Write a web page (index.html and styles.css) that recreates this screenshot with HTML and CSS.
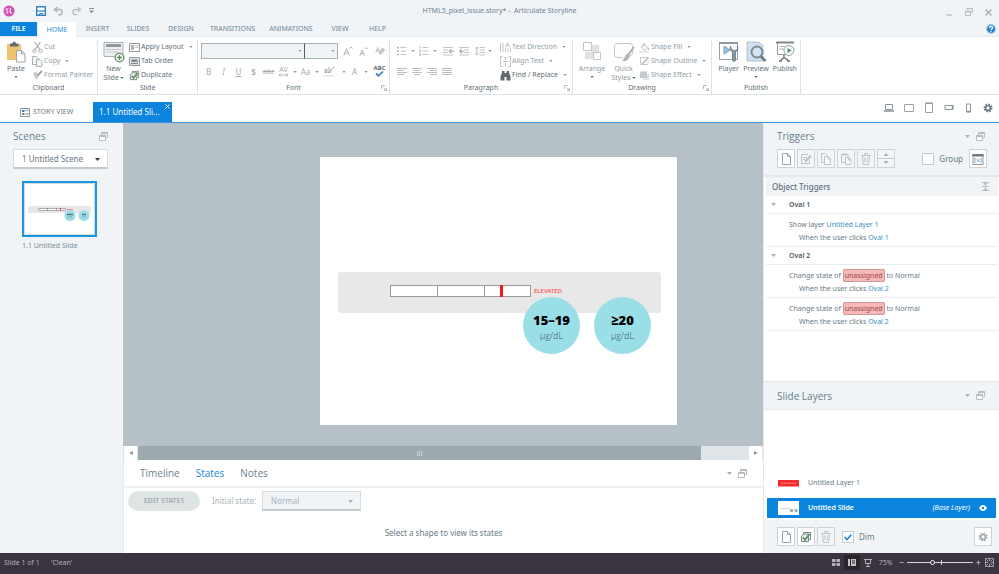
FILE: index.html
```html
<!DOCTYPE html>
<html lang="en">
<head>
<meta charset="utf-8">
<title>HTML5_pixel_issue.story* - Articulate Storyline</title>
<link rel="stylesheet" href="styles.css">
</head>
<body>
<svg class="defs" aria-hidden="true">
  <symbol id="i-caret" viewBox="0 0 5 3"><path d="M0 0h5L2.500 3z" fill="currentColor"/></symbol>
  <symbol id="i-launch" viewBox="0 0 6 6"><path d="M.5 4V.5H4M2.500 2.500l3 3M5.500 3v2.500H3" fill="none" stroke="#b4bcc1"/></symbol>
  <symbol id="i-dock" viewBox="0 0 9 9"><path d="M2.500 3V.5h6v5H7" fill="none" stroke="#b5bdc2"/><path d="M2.500 1.200h6" stroke="#b5bdc2" stroke-width="1.500"/><path d="M.5 3.500h6v5h-6z" fill="#fff" stroke="#b5bdc2"/><path d="M.5 4.200h6" stroke="#b5bdc2" stroke-width="1.500"/></symbol>
  <symbol id="i-page" viewBox="0 0 12 14"><path d="M2.500 1.500h5l3 3v8h-8zM7.500 1.500v3h3" fill="#fff" stroke="currentColor"/></symbol>
  <symbol id="i-copy" viewBox="0 0 12 14"><path d="M1.500 1.500h4l2 2v7h-6z" fill="none" stroke="currentColor"/><path d="M4.500 4.500h4l2 2v6h-6zM8 4.500v2.500h2.500" fill="#f7f9fa" stroke="currentColor"/></symbol>
  <symbol id="i-clip" viewBox="0 0 12 14"><path d="M1.500 2.500h6.500v8h-6.500z" fill="none" stroke="currentColor"/><path d="M3 2.500h3.500" stroke="currentColor" stroke-width="2"/><path d="M5.500 5.500h3.500l2 2v5h-5.500zM8.500 5.500v2.500h2.500" fill="#f7f9fa" stroke="currentColor"/></symbol>
  <symbol id="i-trash" viewBox="0 0 12 14"><path d="M1.500 3.500h9M4.500 3v-1.500h3v1.500M2.500 4l.7 8.500h5.600L9.500 4M4.800 5.500v5M7.200 5.500v5" fill="none" stroke="currentColor"/></symbol>
  <symbol id="i-gear" viewBox="0 0 12 12"><circle cx="6" cy="6" r="4.400" fill="none" stroke="currentColor" stroke-width="2" stroke-dasharray="1.730 1.730"/><circle cx="6" cy="6" r="2.900" fill="none" stroke="currentColor" stroke-width="1.700"/></symbol>
  <symbol id="i-al" viewBox="0 0 10 9"><path d="M0 1.500h10M0 3.500h7M0 5.500h10M0 7.500h7" stroke="#b8bec2"/></symbol>
  <symbol id="i-ac" viewBox="0 0 10 9"><path d="M0 1.500h10M2 3.500h6M0 5.500h10M2 7.500h6" stroke="#b8bec2"/></symbol>
  <symbol id="i-ar" viewBox="0 0 10 9"><path d="M0 1.500h10M3 3.500h7M0 5.500h10M3 7.500h7" stroke="#b8bec2"/></symbol>
  <symbol id="i-aj" viewBox="0 0 10 9"><path d="M0 1.500h10M0 3.500h10M0 5.500h10M0 7.500h10" stroke="#b8bec2"/></symbol>
  <symbol id="i-dup" viewBox="0 0 12 12"><path d="M3.500 3V1.500h7v7H9" fill="none" stroke="#77848b"/><path d="M1.500 5l2.500-2h4.500v7.500h-7z" fill="#e9f2ea" stroke="#77848b"/><path d="M3 6.500l2 2.300L9.500 3" fill="none" stroke="#55905a" stroke-width="1.800"/></symbol>
</svg>

<div class="app">
  <header class="titlebar">
    <div class="quick">
      <svg class="logo" viewBox="0 0 12 12" aria-hidden="true"><circle cx="6" cy="6" r="5.500" fill="#cf4fb5"/><path d="M5.500 3.800H4c-1.300 0-1.300 2 0 2s1.500 2.200 0 2.200H2.700M7.300 2.800V8h2" fill="none" stroke="#fff"/></svg>
      <button class="ico save" aria-label="Save"><svg width="10" height="10" viewBox="0 0 10 10"><path d="M.7.7h8.600v8.600H.7z" fill="#fff" stroke="#2f83c4" stroke-width="1.400"/><path d="M1 5h8" stroke="#2f83c4" stroke-width="1.200"/><path d="M3.500 9V7.500h3V9" fill="none" stroke="#2f83c4"/></svg></button>
      <button class="ico" aria-label="Undo"><svg width="11" height="10" viewBox="0 0 11 10"><path d="M4.500 1L1.500 3.500l3 2.500M2 3.500h4.500c3.500 0 3.500 5.300 0 5.300H5" fill="none" stroke="#a9b6bf" stroke-width="1.500"/></svg></button>
      <button class="ico" aria-label="Redo"><svg width="11" height="10" viewBox="0 0 11 10"><path d="M6.500 1l3 2.500-3 2.500M9 3.500H4.500c-3.500 0-3.500 5.300 0 5.300H6" fill="none" stroke="#b9c3ca" stroke-width="1.500"/></svg></button>
      <button class="ico" aria-label="Customize"><svg width="5" height="6" viewBox="0 0 5 6"><path d="M0 .5h5" stroke="#8b969d"/><path d="M0 2.500h5L2.500 5.500z" fill="#8b969d"/></svg></button>
    </div>
    <h1 class="title">HTML5_pixel_issue.story* -&nbsp; Articulate Storyline</h1>
    <div class="winbtns">
      <button class="ico" aria-label="Minimize"><svg width="7" height="8" viewBox="0 0 7 8"><path d="M0 7h6" stroke="#a4acb1"/></svg></button>
      <button class="ico" aria-label="Restore"><svg width="8" height="8" viewBox="0 0 8 8"><path d="M2 2V.5h5.500V4H6M.5 3h5v4.500h-5zM.5 4h5" fill="none" stroke="#b4bbc0"/></svg></button>
      <button class="ico" aria-label="Close"><svg width="7" height="7" viewBox="0 0 7 7"><path d="M.5.5l6 6M6.500.5l-6 6" stroke="#a4acb1" stroke-width="1.300"/></svg></button>
    </div>
  </header>

  <nav class="menu" aria-label="Ribbon tabs">
    <button class="file">FILE</button>
    <button class="on">HOME</button>
    <button class="m-insert">INSERT</button>
    <button class="m-slides">SLIDES</button>
    <button class="m-design">DESIGN</button>
    <button class="m-trans">TRANSITIONS</button>
    <button class="m-anim">ANIMATIONS</button>
    <button class="m-view">VIEW</button>
    <button class="m-help">HELP</button>
    <button class="ico help" aria-label="Help"><svg width="10" height="10" viewBox="0 0 10 10"><circle cx="5" cy="5" r="4.400" fill="#2a7fcb" stroke="#a5c8e6" stroke-width="1.200"/><path d="M3.500 4c0-2 3-2 3-.3C6.500 5 5 4.800 5 6" fill="none" stroke="#fff" stroke-width="1.200"/><circle cx="5" cy="7.500" r=".7" fill="#fff"/></svg></button>
  </nav>

  <div class="ribbon">
    <section class="group g-clip">
      <div class="body">
        <button class="big w33">
          <svg width="22" height="22" viewBox="0 0 22 22"><path d="M2 3h14v16H2z" fill="#f0c46e"/><path d="M5 5.500v-3h2.500c0-2.500 3.500-2.500 3.500 0h2.500v3z" fill="#626a70"/><path d="M11.500 9.500h5l3.500 3.500v8h-8.500zM16.500 9.500V13H20" fill="#fff" stroke="#9aa3a9"/></svg>
          <span>Paste</span><svg class="caret"><use href="#i-caret"/></svg></button>
        <div class="stack">
          <button class="small off"><svg viewBox="0 0 11 11"><path d="M2.500 0L8 7.500M8.500 0L3 7.500" stroke="#a4abb0" stroke-width="1.200"/><circle cx="2.500" cy="8.800" r="1.600" fill="none" stroke="#a4abb0"/><circle cx="8.500" cy="8.800" r="1.600" fill="none" stroke="#a4abb0"/></svg>Cut</button>
          <button class="small off"><svg viewBox="0 0 11 11"><path d="M.5.500h4l2 2v6h-6z" fill="#f3f5f6" stroke="#abb2b7"/><path d="M4.500 3.500h3.500l2 2v5H4.500z" fill="#f3f5f6" stroke="#abb2b7"/></svg>Copy<svg class="caret"><use href="#i-caret"/></svg></button>
          <button class="small off"><svg viewBox="0 0 11 11"><path d="M1 3l3-1 3 3.500L4.500 10C3 8 2 6 1 3z" fill="#c6cbcf"/><path d="M5.500 5.500L10 1" stroke="#a0a7ac" stroke-width="1.800"/></svg>Format Painter</button>
        </div>
      </div>
      <h2>Clipboard</h2>
    </section>

    <section class="group g-slide">
      <div class="body">
        <button class="big w31 newslide">
          <svg width="22" height="22" viewBox="0 0 22 22"><path d="M1 1.500h19v14H1z" fill="#edf0f2" stroke="#a9b0b5"/><path d="M3 4.500h15" stroke="#8f989e" stroke-width="3"/><path d="M3 8.500h15M3 11h11" stroke="#c3c9cd"/><circle cx="16.500" cy="16.500" r="4.300" fill="#fff" stroke="#7b9a80" stroke-width="1.600"/><path d="M16.500 14v5M14 16.500h5" stroke="#5c8a62" stroke-width="1.500"/></svg>
          <span>New<br>Slide<svg class="caret"><use href="#i-caret"/></svg></span></button>
        <div class="stack">
          <button class="small"><svg viewBox="0 0 11 11"><path d="M.5 1.500h10v8H.5z" fill="#fff" stroke="#8f989e"/><path d="M2 3h3v5H2z" fill="#aab2b7"/><path d="M6 3.500h3.500M6 5.500h3.500" stroke="#b7bec2"/></svg>Apply Layout<svg class="caret gap"><use href="#i-caret"/></svg></button>
          <button class="small"><svg viewBox="0 0 11 11"><path d="M.5 1.500h10v8H.5z" fill="#dfe3e6" stroke="#8f989e"/><path d="M2.500 3.500h6v2.500h-6z" fill="#7f898f"/><path d="M2 7.500h7" stroke="#7f898f"/></svg>Tab Order</button>
          <button class="small"><svg><use href="#i-dup"/></svg>Duplicate</button>
        </div>
      </div>
      <h2>Slide</h2>
    </section>

    <section class="group g-font">
      <div class="fontrow">
        <div class="selwrap fname"><select aria-label="Font"><option></option></select><svg class="caret"><use href="#i-caret"/></svg></div><div class="selwrap fsize"><select aria-label="Font size"><option></option></select><svg class="caret"><use href="#i-caret"/></svg></div>
        <div class="sizers">
          <button class="t" aria-label="Grow font"><svg width="10" height="11" viewBox="0 0 10 11"><path d="M.8 9.500L3.500 2.500l2.800 7M1.700 7h3.700M6.500 2.500L8 1l1.500 1.500" fill="none" stroke="#b0b7bb"/></svg></button>
          <button class="t" aria-label="Shrink font"><svg width="10" height="11" viewBox="0 0 10 11"><path d="M1 9.500l2.200-5.500 2.200 5.500M1.800 7.500h2.900M6 1.500l1.500 1.500L9 1.500" fill="none" stroke="#b0b7bb"/></svg></button>
          <button class="t" aria-label="Clear formatting"><svg width="10" height="10" viewBox="0 0 10 10"><path d="M.8 6.500l2-5 2 5M1.500 5h2.700" fill="none" stroke="#b8bec2"/><path d="M4 7l3.500-5L9.500 4 6 8.500z" fill="#ccd1d4" stroke="#b8bec2"/></svg></button>
        </div>
      </div>
      <div class="fontrow two">
        <button class="t">B</button><button class="t"><i>I</i></button><button class="t"><u>U</u></button><button class="t"><b>S</b></button><button class="t strike"><s>abc</s></button>
        <button class="t av" aria-label="Character spacing"><span>AV</span><svg width="11" height="4" viewBox="0 0 11 4"><path d="M1 2h9M2.500.5L1 2l1.500 1.500M8.500.5L10 2 8.500 3.500" fill="none" stroke="#b0b7bb"/></svg></button><svg class="caret"><use href="#i-caret"/></svg>
        <button class="t wide">Aa</button><svg class="caret"><use href="#i-caret"/></svg>
        <button class="t hl" aria-label="Highlight"><svg width="12" height="11" viewBox="0 0 12 11"><path d="M0 9h11v2H0z" fill="#e9edf0"/><path d="M4 7l5.500-5.500M9 .500l1.500 1.500M.5 3.500h2.500v3H1c-1 0-1-1.500 0-1.500h2M5 1v5.500h1.500c1 0 1-2.500 0-2.500" fill="none" stroke="#a9b0b5"/></svg></button><svg class="caret"><use href="#i-caret"/></svg>
        <button class="t a">A</button><svg class="caret"><use href="#i-caret"/></svg>
        <button class="t spell" aria-label="Spelling"><span>ABC</span><svg width="9" height="6" viewBox="0 0 9 6"><path d="M1 2.500l2.500 2.300L8 .5" fill="none" stroke="#3c7fc0" stroke-width="1.700"/></svg></button>
      </div>
      <h2>Font<svg class="launch"><use href="#i-launch"/></svg></h2>
    </section>

    <section class="group g-para">
      <div class="body">
        <div class="pcol">
          <div class="prow">
            <svg width="11" height="10" viewBox="0 0 11 10"><path d="M0 1.500h2M0 5h2M0 8.500h2" stroke="#aeb5b9" stroke-width="1.500"/><path d="M3.500 1.500h6M3.500 5h6M3.500 8.500h6" stroke="#c0c6ca"/></svg><svg class="caret"><use href="#i-caret"/></svg>
            <svg width="11" height="10" viewBox="0 0 11 10"><path d="M1 0v2.500M0 4h1.500v1.500H0M0 7.500h1.500v2H0" fill="none" stroke="#aeb5b9" stroke-width=".8"/><path d="M3.500 1.500h6M3.500 5h6M3.500 8.500h6" stroke="#c0c6ca"/></svg><svg class="caret"><use href="#i-caret"/></svg>
            <svg class="ind" width="11" height="9" viewBox="0 0 11 9"><path d="M0 .5h10M0 3h5M0 5.500h5M0 8h10" stroke="#c0c6ca"/><path d="M11 4.300H6.500M8.500 2L6.200 4.300l2.300 2.200" fill="none" stroke="#aeb5b9" stroke-width="1.200"/></svg>
            <svg class="ind" width="11" height="9" viewBox="0 0 11 9"><path d="M0 .5h10M5 3h5M5 5.500h5M0 8h10" stroke="#c0c6ca"/><path d="M5 4.300H.8M2.800 2L.6 4.300l2.200 2.200" fill="none" stroke="#aeb5b9" stroke-width="1.200"/></svg>
            <svg class="ind" width="10" height="10" viewBox="0 0 10 10"><path d="M4.500 1.500H10M4.500 4H10M4.500 6.500H10M4.500 9H10" stroke="#c0c6ca"/><path d="M1.800 1v8M.3 2.500L1.800 1l1.500 1.500M.3 7.500L1.800 9l1.500-1.500" fill="none" stroke="#aeb5b9"/></svg><svg class="caret"><use href="#i-caret"/></svg>
          </div>
          <div class="prow al">
            <button class="ico" aria-label="Align left"><svg width="10" height="9"><use href="#i-al"/></svg></button><button class="ico" aria-label="Center"><svg width="10" height="9"><use href="#i-ac"/></svg></button><button class="ico" aria-label="Align right"><svg width="10" height="9"><use href="#i-ar"/></svg></button><button class="ico" aria-label="Justify"><svg width="10" height="9"><use href="#i-aj"/></svg></button>
          </div>
        </div>
        <div class="stack">
          <button class="small off"><svg viewBox="0 0 11 11"><path d="M.5 1v9M3 1v9M5.500 6v4M8 6v4M10.500 6v4M5.500 5L7.500.500l2 4.500M6.500 3.500h2" fill="none" stroke="#b8bec2" stroke-width=".9"/></svg>Text Direction<svg class="caret"><use href="#i-caret"/></svg></button>
          <button class="small off"><svg viewBox="0 0 11 11"><path d="M2.500.500h-2v10h2M8.500.500h2v10h-2M3 5.500h5M5.500 4V1M4.500 2l1-1 1 1M5.500 7v3M4.500 9l1 1 1-1" fill="none" stroke="#b8bec2" stroke-width=".9"/></svg>Align Text<svg class="caret"><use href="#i-caret"/></svg></button>
          <button class="small"><svg viewBox="0 0 11 11"><path d="M2 1h2.500v2h2V1H9v2l1.500 3v4.500h-4V7h-2v3.500h-4V6L2 3z" fill="#626a6f"/></svg>Find / Replace<svg class="caret"><use href="#i-caret"/></svg></button>
        </div>
      </div>
      <h2>Paragraph<svg class="launch"><use href="#i-launch"/></svg></h2>
    </section>

    <section class="group g-draw">
      <div class="body">
        <button class="big off w33">
          <svg width="22" height="22" viewBox="0 0 22 22"><path d="M4 11h8v7H4z" fill="#dfe2e4"/><path d="M10 4h8v8h-8z" fill="#dfe2e4"/><path d="M2.500 1.500h8v8h-8z" fill="#fff" stroke="#bec4c8"/><path d="M12.500 11.500h7v7h-7z" fill="#fff" stroke="#bec4c8"/></svg>
          <span>Arrange</span><svg class="caret"><use href="#i-caret"/></svg></button>
        <button class="big off w31">
          <svg width="22" height="22" viewBox="0 0 22 22"><path d="M4.500 2.500h12c2 0 3 1 3 3v6c0 2-1 3-3 3l-6 4-2-2h-4c-2 0-3-1-3-3v-8c0-2 1-3 3-3z" fill="#fdfdfd" stroke="#bec4c8"/><path d="M21 6l-6 8" stroke="#a9b0b5" stroke-width="2"/><path d="M14.500 12.500l2.500 2c-1 4-4 6-8 6 3-1.500 2-6 5.500-8z" fill="#aeb5ba"/></svg>
          <span>Quick<br>Styles<svg class="caret"><use href="#i-caret"/></svg></span></button>
        <div class="stack">
          <button class="small off"><svg viewBox="0 0 11 11"><path d="M5 1.500l4 4-3.500 3-3.500-3.500zM5 1.500v3M9.500 6v2" fill="none" stroke="#b4bbbf"/><path d="M0 9h10v2H0z" fill="#e6eaec"/></svg>Shape Fill<svg class="caret"><use href="#i-caret"/></svg></button>
          <button class="small off"><svg viewBox="0 0 11 11"><path d="M8 1.500H1.500v7H9V5" fill="none" stroke="#c6ccd0"/><path d="M3 8l6.500-6.500" stroke="#aeb5b9" stroke-width="1.300"/></svg>Shape Outline<svg class="caret"><use href="#i-caret"/></svg></button>
          <button class="small off"><svg viewBox="0 0 11 11"><path d="M4 4h6v6H4z" fill="#dde1e4"/><path d="M1 1.500h7v6.500H1z" fill="#c3c9cd"/></svg>Shape Effect<svg class="caret"><use href="#i-caret"/></svg></button>
        </div>
      </div>
      <h2>Drawing<svg class="launch"><use href="#i-launch"/></svg></h2>
    </section>

    <section class="group g-pub">
      <div class="body">
        <button class="big w27">
          <svg width="22" height="22" viewBox="0 0 22 22"><path d="M1.500 1.500h18v17h-18z" fill="#fff" stroke="#98a1a7"/><path d="M1 1h19v2H1z" fill="#8d979d"/><path d="M6 5v8l6-4z" fill="#9cc3e6" stroke="#6f9dc4"/><path d="M12.500 5c-1 3 0 5 2 6v8c0 2 3 2 3 0v-8c2-1 3-3 2-6v3.500l-3 1-3-1z" fill="#8b98a1" stroke="#6e7a82" stroke-width=".8"/></svg>
          <span>Player</span></button>
        <button class="big w27">
          <svg width="22" height="22" viewBox="0 0 22 22"><path d="M2 1h12l4 4v15H2z" fill="#cfe0f2" stroke="#98a1a7" stroke-dasharray="1.500 1"/><circle cx="12" cy="11" r="5.500" fill="#d4e4f3" stroke="#7e8b94" stroke-width="2"/><path d="M16 15.500l4.500 4.500" stroke="#6e7a82" stroke-width="2.500"/></svg>
          <span>Preview</span><svg class="caret"><use href="#i-caret"/></svg></button>
        <button class="big w31">
          <svg width="22" height="22" viewBox="0 0 22 22"><path d="M2 1.500h18" stroke="#7e888e" stroke-width="2"/><path d="M3.500 2v11.500h10" fill="none" stroke="#98a1a7"/><path d="M5 5.500h6M5 8h5" stroke="#b0b7bb"/><circle cx="15" cy="9.500" r="5" fill="#f7faf8" stroke="#98a1a7"/><path d="M13.500 7v5l4-2.500z" fill="#4d9572"/><path d="M10 14v3M6 20l4-3.500L15 20M5 20h3M13 20h3" fill="none" stroke="#6e787e" stroke-width="1.500"/></svg>
          <span>Publish</span></button>
      </div>
      <h2>Publish</h2>
    </section>
  </div>

  <div class="docs">
    <button class="story"><svg width="10" height="9" viewBox="0 0 10 9"><path d="M.5.5h9v8h-9z" fill="#fff" stroke="#8b969d"/><path d="M2 2h2.500v2H2z" fill="#2f83c4"/><path d="M2 5h2.500v2H2z" fill="#77838a"/><path d="M5.500 2.500H8.500M5.500 6h3" stroke="#9aa4aa" stroke-width="1.500"/></svg>STORY VIEW</button>
    <div class="doctab"><span>1.1 Untitled Sli...</span><button class="ico x" aria-label="Close tab"><svg width="5" height="5" viewBox="0 0 5 5"><path d="M.5.5l4 4M4.500.5l-4 4" stroke="#fff"/></svg></button></div>
    <div class="devices">
      <button class="ico" aria-label="Desktop"><svg width="12" height="12" viewBox="0 0 12 12"><path d="M2.500 2.500h7v5h-7z" fill="none" stroke="#8b959b"/><path d="M1 9h10" stroke="#8b959b" stroke-width="1.500"/></svg></button>
      <button class="ico" aria-label="Tablet landscape"><svg width="12" height="12" viewBox="0 0 12 12"><path d="M1.500 2.500h9v7h-9z" fill="none" stroke="#9aa3a8"/></svg></button>
      <button class="ico" aria-label="Tablet portrait"><svg width="12" height="12" viewBox="0 0 12 12"><path d="M2.500 1.500h7v9h-7z" fill="none" stroke="#9aa3a8"/><path d="M2 1h8" stroke="#8b959b"/></svg></button>
      <button class="ico" aria-label="Phone landscape"><svg width="12" height="12" viewBox="0 0 12 12"><path d="M2 3.500h8v4H2z" fill="none" stroke="#8b959b"/><path d="M9.500 3v5" stroke="#8b959b" stroke-width="1.500"/></svg></button>
      <button class="ico" aria-label="Phone portrait"><svg width="12" height="12" viewBox="0 0 12 12"><path d="M3.500 2h4v8h-4z" fill="none" stroke="#8b959b"/><path d="M3.500 9.500h4" stroke="#8b959b" stroke-width="1.500"/></svg></button>
      <button class="ico gear" aria-label="Settings"><svg width="10" height="10"><use href="#i-gear"/></svg></button>
    </div>
  </div>

  <main class="work">
    <aside class="scenes">
      <div class="phead"><h2>Scenes</h2><svg class="dock"><use href="#i-dock"/></svg></div>
      <div class="selwrap scene"><select aria-label="Scene"><option>1 Untitled Scene</option></select><svg class="caret"><use href="#i-caret"/></svg></div>
      <figure>
        <svg class="thumb" viewBox="0 0 75 56" aria-hidden="true"><path d="M1 1h73v54H1z" fill="#fff" stroke="#1a96dd" stroke-width="2"/><path d="M2.500 2.500h70v51h-70z" fill="#fff" stroke="#d5dade"/><path d="M6 25h63v7H6z" fill="#e8e8e8"/><path d="M16.500 27.500h27v2h-27zM25.500 27v3M34.500 27v3" fill="#fff" stroke="#8d8d8d" stroke-width=".7"/><path d="M38.500 27v3" stroke="#e44" stroke-width="1"/><path d="M45 28.500h6" stroke="#f08a86"/><circle cx="48" cy="34.500" r="5.500" fill="#9adfe7"/><circle cx="62" cy="34.500" r="5.500" fill="#9adfe7"/><path d="M45 33.500h6M60 33.500h4" stroke="#3d5054" stroke-width="1.500" stroke-dasharray="1.500 .6"/><path d="M46 36h4M60.500 36h3" stroke="#6a8a90" stroke-dasharray="1 .6"/></svg>
        <figcaption>1.1 Untitled Slide</figcaption>
      </figure>
    </aside>

    <div class="center">
      <div class="stage">
        <div class="slide">
          <div class="band"></div>
          <div class="gauge"><span></span><span></span><span></span></div>
          <div class="mark"></div>
          <div class="elev">ELEVATED</div>
          <div class="oval one"><strong>15–19</strong><span>μg/dL</span></div>
          <div class="oval second"><strong>≥20</strong><span>μg/dL</span></div>
        </div>
      </div>
      <div class="hscroll">
        <button class="ico" aria-label="Scroll left"><svg width="4" height="4" viewBox="0 0 4 4"><path d="M4 0v4L0 2z" fill="#8d989e"/></svg></button>
        <div class="thumbbar"><i></i><i></i><i></i></div>
        <div class="track"></div>
        <button class="ico" aria-label="Scroll right"><svg width="4" height="4" viewBox="0 0 4 4"><path d="M0 0v4l4-2z" fill="#8d989e"/></svg></button>
      </div>
      <section class="bottom">
        <div class="btabs"><button>Timeline</button><button class="on">States</button><button>Notes</button><span class="tools"><svg class="caret"><use href="#i-caret"/></svg><svg class="dock"><use href="#i-dock"/></svg></span></div>
        <div class="states">
          <button class="edit">EDIT STATES</button>
          <label for="init">Initial state:</label>
          <div class="selwrap init"><select id="init"><option>Normal</option></select><svg class="caret"><use href="#i-caret"/></svg></div>
        </div>
        <p class="hint">Select a shape to view its states</p>
      </section>
    </div>

    <aside class="right">
      <div class="trighead">
        <div class="phead"><h2>Triggers</h2><span class="tools"><svg class="caret"><use href="#i-caret"/></svg><svg class="dock"><use href="#i-dock"/></svg></span></div>
        <div class="tbar">
          <button class="sq live" aria-label="New trigger"><svg><use href="#i-page"/></svg></button>
          <button class="sq" aria-label="Edit"><svg viewBox="0 0 12 14"><path d="M9.500 8v3.500h-8v-9H8M3 5.500h4M3 7.500h2.500" fill="none" stroke="currentColor"/><path d="M5 10l6-6.500" stroke="currentColor" stroke-width="2"/></svg></button>
          <button class="sq" aria-label="Copy"><svg><use href="#i-copy"/></svg></button>
          <button class="sq" aria-label="Paste"><svg><use href="#i-clip"/></svg></button>
          <button class="sq" aria-label="Delete"><svg><use href="#i-trash"/></svg></button>
          <button class="sq" aria-label="Reorder"><svg class="ud" viewBox="0 0 16 17"><path d="M0 8.500h16" stroke="#c5ccd0"/><path d="M5.500 6h5L8 3zM5.500 11h5L8 14z" fill="#aab2b7"/></svg></button>
          <label class="check grp"><input type="checkbox">Group</label>
          <button class="sq live" aria-label="Variables"><svg viewBox="0 0 12 14"><path d="M1 2.500h10v10H1z" fill="#fff" stroke="#8b969d"/><path d="M.5 2h11v2.500H.5z" fill="#6b767d"/><path d="M3.500 6c-1 1-1 4 0 5M8.500 6c1 1 1 4 0 5M4.800 7.200l2.400 2.600M7.200 7.200L4.800 9.800" fill="none" stroke="#5b97c6" stroke-width=".9"/></svg></button>
        </div>
      </div>
      <div class="triggers">
        <div class="objhead"><h3>Object Triggers</h3><svg width="7" height="9" viewBox="0 0 7 9"><path d="M0 4.500h7M0 .5h7M0 8.500h7" stroke="#b8bfc4"/><path d="M1.500 1h4L3.500 4zM1.500 8h4L3.500 5z" fill="#b8bfc4"/></svg></div>
        <h4><svg class="caret"><use href="#i-caret"/></svg>Oval 1</h4>
        <div class="trig"><p>Show layer <a href="#layer">Untitled Layer 1</a></p><p class="when">When the user clicks <a href="#oval1">Oval 1</a></p></div>
        <h4><svg class="caret"><use href="#i-caret"/></svg>Oval 2</h4>
        <div class="trig"><p>Change state of <mark>unassigned</mark> to Normal</p><p class="when">When the user clicks <a href="#oval2">Oval 2</a></p></div>
        <div class="trig"><p>Change state of <mark>unassigned</mark> to Normal</p><p class="when">When the user clicks <a href="#oval2">Oval 2</a></p></div>
      </div>
      <div class="phead layhead"><h2>Slide Layers</h2><span class="tools"><svg class="caret"><use href="#i-caret"/></svg><svg class="dock"><use href="#i-dock"/></svg></span></div>
      <div class="layers">
        <div class="layer"><svg viewBox="0 0 21 14"><path d="M0 4h21v6.500H0z" fill="#f42a2a"/><path d="M3 7.200h15" stroke="#ff9a9a" stroke-dasharray="2 .7"/></svg>Untitled Layer 1</div>
        <div class="layer sel"><svg viewBox="0 0 21 14"><path d="M0 0h21v14H0z" fill="#fff"/><path d="M2 7.500h10" stroke="#d2d6d9"/><path d="M12 8h3v3h-3zM16.500 8h3v3h-3z" fill="#9fb0b5"/></svg><b>Untitled Slide</b><em>(Base Layer)</em><svg class="eye" viewBox="0 0 8 6"><path d="M0 3c2-4 6-4 8 0-2 4-6 4-8 0z" fill="#fff"/><circle cx="4" cy="3" r="1.200" fill="#0a84dc"/></svg></div>
      </div>
      <div class="tbar laybar">
        <button class="sq live" aria-label="New layer"><svg><use href="#i-page"/></svg></button>
        <button class="sq live" aria-label="Duplicate layer"><svg><use href="#i-dup"/></svg></button>
        <button class="sq" aria-label="Delete layer"><svg><use href="#i-trash"/></svg></button>
        <label class="check dim"><input type="checkbox" checked>Dim</label>
        <button class="sq live last" aria-label="Layer properties"><svg class="g"><use href="#i-gear"/></svg></button>
      </div>
    </aside>
  </main>

  <footer class="status">
    <span>Slide 1 of 1</span><span class="clean">'Clean'</span>
    <div class="views">
      <button class="ico" aria-label="Story view"><svg width="8" height="7" viewBox="0 0 8 7"><path d="M0 0h3.500v3H0zM4.500 0H8v3H4.500zM0 4h3.500v3H0zM4.500 4H8v3H4.500z" fill="#b3afb7"/></svg></button>
      <button class="ico on" aria-label="Slide view"><svg width="8" height="7" viewBox="0 0 8 7"><path d="M0 0h8v7H0z" fill="#c6c2c9"/><path d="M2.500 0v7M4 2h3M4 4h3" stroke="#2a252d"/></svg></button>
      <button class="ico" aria-label="Preview"><svg width="8" height="8" viewBox="0 0 8 8"><path d="M0 .5h8M1.500 1v3.500h5V1M4 4.500V7M2 7.500h4" fill="none" stroke="#b3afb7"/></svg></button>
      <span class="pct">75%</span>
      <span class="sign">−</span><input type="range" min="0" max="200" value="75" aria-label="Zoom"><span class="sign">+</span>
      <button class="ico fit" aria-label="Fit"><svg width="9" height="9" viewBox="0 0 9 9"><path d="M.5.500h8v8h-8zM1.500 1.500L3.500 3.500M7.500 1.500L5.500 3.500M1.500 7.500L3.500 5.500M7.500 7.500L5.500 5.500M4.500 0v3M4.500 6v3M0 4.500h3M6 4.500h3" fill="none" stroke="#aaa6ae" stroke-width=".9"/></svg></button>
    </div>
  </footer>
</div>
</body>
</html>
```
FILE: styles.css
```css
* { box-sizing: border-box; margin: 0; padding: 0; }
body { font: 8px/10px "Noto Sans", "Open Sans", sans-serif; color: #6a7a85; background: #fff; }
button, select, input { font: inherit; color: inherit; background: none; border: 0; border-radius: 0; }
h1, h2, h3, h4 { font-weight: 400; font-size: inherit; }
a { color: #3793bd; text-decoration: none; }
svg { flex: none; display: block; }
.defs { position: absolute; width: 0; height: 0; }
.caret { width: 5px; height: 3px; color: #8b969d; }
.dock { width: 9px; height: 9px; }
.ico { display: flex; align-items: center; justify-content: center; }
.app { min-height: 100vh; display: flex; flex-direction: column; }

.titlebar { display: grid; grid-template-columns: 1fr auto 1fr; align-items: center; height: 22px; background: #f0f4f7; }
.quick { display: flex; align-items: center; gap: 7px; padding-left: 3px; }
.logo { width: 12px; height: 12px; }
.save { margin-left: 14px; }
.title { font-size: 7px; color: #6d8292; }
.winbtns { display: flex; justify-content: flex-end; align-items: center; gap: 12px; padding: 2px 7px 0 0; }

.menu { display: flex; height: 15px; background: #f0f4f7; border-bottom: 1px solid #e3e8eb; font-size: 7px; color: #6f8494; }
.menu button { height: 14px; line-height: 14px; text-align: center; }
.menu .file { width: 37px; background: #0a84dc; color: #fff; font-weight: 600; margin-right: 1px; }
.menu .on { width: 38px; height: 15px; background: #fff; color: #2d8fd6; }
.m-insert { width: 43px; }
.m-slides { width: 38px; }
.m-design { width: 48px; }
.m-trans { width: 55px; }
.m-anim { width: 62px; }
.m-view { width: 36px; }
.m-help { width: 39px; }
.menu .help { margin: 0 3px 0 auto; }

.ribbon { display: flex; height: 58px; background: #fff; border-bottom: 1px solid #dfe3e6; padding-top: 3px; font-size: 7px; color: #5f6f79; }
.group { position: relative; display: flex; flex-direction: column; height: 54px; border-right: 1px solid #dfe3e6; }
.g-clip { width: 98px; }
.g-slide { width: 100px; }
.g-font { width: 192px; }
.g-para { width: 183px; }
.g-draw { width: 139px; }
.g-pub { width: 89px; }
.group h2 { line-height: 12px; margin-top: auto; text-align: center; }
.launch { position: absolute; right: 2px; bottom: 3px; width: 6px; height: 6px; }
.body { display: flex; height: 42px; }
.g-draw .body, .g-pub .body { padding-left: 3px; }
.big { display: flex; flex-direction: column; align-items: center; line-height: 9px; padding-top: 1px; }
.big > span { margin-top: 1px; }
.big .caret { margin-top: 3px; width: 4px; height: 2px; color: #5d6a72; }
.big span .caret { display: inline-block; margin: 0 0 1px 1px; }
.w33 { width: 32px; }
.w31 { width: 31px; }
.w27 { width: 28px; }
.off { color: #929ea6; }
.newslide span { color: #5f7a68; }
.small { display: flex; align-items: center; gap: 1px; height: 14px; white-space: nowrap; }
.small > svg:first-child { width: 11px; height: 11px; }
.small .caret { width: 4px; height: 2px; margin-left: 4px; }

.selwrap { position: relative; display: flex; align-items: center; }
.selwrap select { appearance: none; width: 100%; height: 20px; padding: 0 8px; background: #fff; border: 1px solid #d5dbdf; border-bottom: 2px solid #c3cace; }
.selwrap .caret { position: absolute; right: 8px; top: 9px; pointer-events: none; }
.fontrow { display: flex; align-items: center; height: 22px; padding: 0 2px 0 3px; }
.fontrow select { height: 16px; border: 1px solid #a7b0b5; background: #f0f4f7; }
.fontrow .selwrap .caret { right: 3px; top: 7px; width: 4px; height: 2px; }
.fname { width: 104px; }
.fsize { width: 34px; margin-left: -1px; }
.fsize select { border-left-color: #555f65; }
.sizers { display: flex; margin-left: 2px; gap: 1px; }
.two { height: 19px; }
.t { width: 15px; display: flex; align-items: center; justify-content: center; font-size: 8px; line-height: 9px; color: #a3abb1; }
.two > .caret { width: 4px; height: 2px; margin: 0 1px 0 2px; }
.av { flex-direction: column; line-height: 7px; }
.strike, .av { font-size: 7px; }
.hl { width: 20px; }
.fontrow .spell { flex-direction: column; margin-left: auto; font-size: 6px; line-height: 5px; font-weight: 700; color: #5d686f; }

.pcol { width: 110px; padding: 1px 0 0 7px; }
.prow { display: flex; align-items: center; gap: 3px; height: 20px; }
.prow .caret { width: 4px; height: 2px; margin-right: 1px; }
.prow .ind { margin-left: 2px; }
.al { gap: 5px; }

.docs { display: flex; align-items: flex-end; height: 28px; background: #fff; border-bottom: 1px solid #3a93de; font-size: 7px; }
.story { display: flex; align-items: center; gap: 3px; width: 93px; height: 20px; padding-left: 20px; white-space: nowrap; }
.doctab { position: relative; width: 79px; height: 20px; padding-left: 6px; background: #0a84dc; color: #fff; font-size: 8px; line-height: 20px; white-space: nowrap; }
.x { position: absolute; right: 2px; top: 2px; }
.devices { display: flex; gap: 8px; margin-left: auto; padding: 0 6px 8px 0; }
.gear { color: #5d6d76; }

.work { flex: 1; display: flex; }
.scenes { width: 123px; background: #f0f4f7; padding: 0 15px 0 13px; }
.phead { display: flex; align-items: center; justify-content: space-between; height: 26px; }
.phead h2, .btabs { font-family: "Open Sans", "Noto Sans", sans-serif; font-size: 10px; color: #6b7f8d; }
.tools { display: flex; align-items: center; gap: 6px; }
.tools .caret { color: #aab2b7; }
.scene .caret { color: #333b40; }
.scenes figure { margin: 12px 0 0 9px; }
.thumb { width: 75px; height: 56px; }
.scenes figcaption { margin-top: 4px; font-size: 7px; color: #7b8c97; }

.center { flex: 1; display: flex; flex-direction: column; min-width: 0; }
.stage { flex: 1; background: #b6c1c7; padding: 34px 86px 0 197px; }
.slide { position: relative; height: 268px; background: #fff; }
.band { position: absolute; left: 18px; top: 115px; width: 323px; height: 41px; background: #e8e8e8; border-radius: 3px; }
.gauge { position: absolute; left: 70px; top: 128px; width: 141px; height: 12px; display: grid; grid-template-columns: repeat(3, 1fr); border: 1px solid #9a9a9a; background: #fff; }
.gauge span + span { border-left: 1px solid #9a9a9a; }
.mark { position: absolute; left: 180px; top: 128px; width: 3px; height: 12px; background: #f8171b; }
.elev { position: absolute; left: 214px; top: 128px; font-size: 6px; line-height: 12px; color: #ff4a43; font-weight: 500; }
.oval { position: absolute; top: 140px; width: 57px; height: 57px; border-radius: 50%; background: #9adfe7; display: flex; flex-direction: column; align-items: center; padding-top: 16px; color: #3b5256; font: 300 9px/15px "Open Sans", "Noto Sans", sans-serif; }
.oval strong { font-size: 13px; font-weight: 800; color: #000; }
.one { left: 203px; }
.second { left: 274px; }
.hscroll { display: flex; height: 14px; background: #dfe5e9; }
.hscroll button { width: 13px; background: #fff; margin: 0 1px; }
.thumbbar { flex: 1; background: #9daab0; display: flex; align-items: center; justify-content: center; gap: 1px; }
.thumbbar i { width: 1px; height: 5px; background: #c8d0d4; }
.track { width: 47px; }
.bottom { background: #fff; height: 93px; border-left: 1px solid #e3e8eb; }
.btabs { display: flex; align-items: center; gap: 16px; height: 28px; padding: 0 16px; border-bottom: 2px solid #edf1f4; }
.btabs .on { color: #1c86d8; }
.btabs .tools { margin-left: auto; }
.states { display: flex; align-items: center; height: 26px; padding-left: 4px; color: #a7b2b9; }
.edit { width: 72px; height: 20px; border-radius: 10px; background: #dfe4e5; font-size: 7px; font-weight: 600; color: #a3acb1; }
.states label { margin: 0 6px 0 12px; }
.init { width: 99px; }
.init select { background: #f0f4f7; }
.init .caret { color: #aab2b7; }
.hint { margin-top: 13px; text-align: center; line-height: 12px; }

.right { width: 236px; display: flex; flex-direction: column; border-left: 1px solid #e3e8eb; background: #fff; }
.trighead { height: 54px; background: #f0f4f7; border-bottom: 2px solid #e3e8eb; }
.right .phead { padding: 0 14px 0 13px; }
.tbar { display: flex; align-items: center; gap: 2px; padding: 0 12px 0 13px; }
.sq { width: 18px; height: 19px; border: 1px solid #cdd4d8; background: #f3f6f8; color: #bcc4c9; display: flex; align-items: center; justify-content: center; }
.sq svg { width: 12px; height: 14px; }
.sq .ud { width: 16px; height: 17px; }
.sq .g { width: 10px; height: 10px; }
.live { background: #fff; color: #9aa4aa; }
.check { display: flex; align-items: center; gap: 5px; }
.check input { appearance: none; width: 12px; height: 12px; border: 1px solid #c5ccd0; background: #fff; }
.check input:checked { background: #fff url("data:image/svg+xml,%3Csvg xmlns='http://www.w3.org/2000/svg' viewBox='0 0 10 10'%3E%3Cpath d='M1.5 5L4 7.5 8.500 2.500' fill='none' stroke='%231c86d8' stroke-width='1.600'/%3E%3C/svg%3E") center / 10px 10px; }
.grp { margin: 0 4px 0 auto; }
.dim { margin-left: 5px; }
.last { margin-left: auto; }
.triggers { flex: 1; padding: 0 1px 0 2px; }
.objhead { display: flex; align-items: center; justify-content: space-between; height: 19px; padding: 0 9px 0 6px; background: #f0f4f7; }
.objhead h3 { font-weight: 500; color: #5d707c; }
.triggers h4 { display: flex; align-items: center; gap: 13px; height: 18px; padding-left: 5px; border-bottom: 1px solid #e8edf0; font-size: 7px; font-weight: 600; color: #4d5b64; }
.triggers h4 .caret { color: #aab2b7; }
.trig { height: 33px; padding: 4px 0 0 23px; border-bottom: 1px solid #e8edf0; font-size: 7px; line-height: 13px; }
.trig .when { padding-left: 10px; }
mark { background: #f5b9b9; color: #a04848; border: 1px solid #c99; border-radius: 2px; padding: 1px; }
.layhead { height: 29px; background: #f0f4f7; border-top: 1px solid #e3e8eb; border-bottom: 1px solid #e3e8eb; }
.layers { height: 110px; display: flex; flex-direction: column; justify-content: flex-end; padding: 0 3px 2px 3px; font-size: 7px; }
.layer { display: flex; align-items: center; gap: 9px; height: 20px; padding: 0 9px 0 11px; margin-bottom: 5px; }
.layer svg { width: 21px; height: 14px; }
.layer .eye { width: 8px; height: 6px; }
.sel { margin: 0; background: #0a84dc; color: #fff; }
.sel b { font-weight: 600; }
.sel em { margin-left: auto; }
.laybar { height: 33px; background: #f0f4f7; padding-right: 7px; }

.status { display: flex; align-items: center; height: 21px; padding: 0 5px 2px 4px; background: #3a343f; color: #b3afb7; font-size: 7px; }
.clean { margin-left: 11px; }
.views { display: flex; align-items: center; margin-left: auto; }
.views .ico { width: 16px; height: 15px; }
.views .on { background: #2a252d; }
.pct { margin: 0 6px 0 3px; }
.sign { font-size: 9px; color: #d4d1d7; }
.views input { appearance: none; width: 66px; height: 9px; margin: 0 3px; background: linear-gradient(#d8d5da, #d8d5da) no-repeat center / 100% 1px, linear-gradient(#d8d5da, #d8d5da) no-repeat 34px center / 1px 5px; }
.views input::-webkit-slider-thumb { appearance: none; width: 5px; height: 5px; border: 1px solid #eee; border-radius: 50%; background: #3a343f; }
.views .fit { width: 9px; margin-left: 4px; }
```
